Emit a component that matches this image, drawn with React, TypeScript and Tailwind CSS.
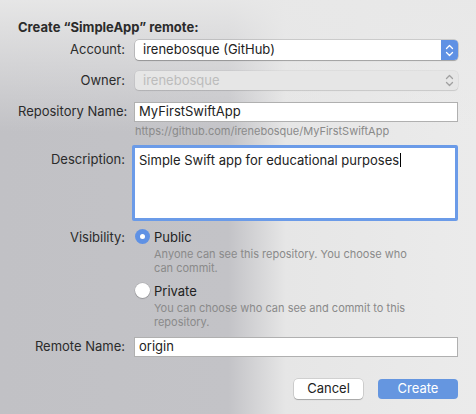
import React from 'react';

function Chevrons({ color }: { color: string }) {
  return (
    <svg width="9" height="13" viewBox="0 0 9 13" fill="none" stroke={color} strokeWidth="1.3" strokeLinecap="round" strokeLinejoin="round">
      <path d="M1.5 4.5 L4.5 1.5 L7.5 4.5" />
      <path d="M1.5 8.5 L4.5 11.5 L7.5 8.5" />
    </svg>
  );
}

function Row({ label, children, className = '' }: { label: string; children: React.ReactNode; className?: string }) {
  return (
    <div className={`flex items-center ${className}`}>
      <div className="w-[116px] shrink-0 whitespace-nowrap pr-[9px] text-right text-[13px] text-[#2b2b2b]">{label}</div>
      <div className="flex-1">{children}</div>
    </div>
  );
}

export default function App() {
  return (
    <div
      className="h-[414px] w-[476px] overflow-hidden bg-[linear-gradient(to_bottom,rgba(232,232,232,0.95)_0%,rgba(232,232,232,0)_32%),linear-gradient(to_right,#c1c1c5_0%,#c3c3c7_48%,#e6e6e6_60%,#ebebeb_100%)] pl-[18px] pr-[18px] pt-[19px]"
      style={{ fontFamily: 'Inter, "Noto Sans", sans-serif' }}
    >
      <div className="h-[16px] text-[13px] font-bold leading-[16px] text-[#2b2b2b]">Create “SimpleApp” remote:</div>

      <Row label="Account:" className="mt-[5px]">
        <div className="ml-[1px] flex h-[20px] items-center rounded-[4px] bg-white shadow-[0_0_0_0.5px_rgba(0,0,0,0.25),0_1px_1px_rgba(0,0,0,0.2)]">
          <span className="flex-1 pl-[8px] text-[13px] text-[#222]">irenebosque (GitHub)</span>
          <div className="flex h-[20px] w-[17px] items-center justify-center rounded-r-[4px] bg-[#5f91e4]">
            <Chevrons color="#ffffff" />
          </div>
        </div>
      </Row>

      <Row label="Owner:" className="mt-[11px]">
        <div className="ml-[1px] flex h-[19px] items-center rounded-[4px] bg-[#e6e6e6] shadow-[0_0_0_0.5px_rgba(0,0,0,0.08),0_1px_1px_rgba(0,0,0,0.1)]">
          <span className="flex-1 pl-[8px] text-[13px] text-[#bcbcbc]">irenebosque</span>
          <div className="flex w-[17px] items-center justify-center">
            <Chevrons color="#a0a0a0" />
          </div>
        </div>
      </Row>

      <Row label="Repository Name:" className="mt-[11px]">
        <div className="flex h-[20px] items-center border border-[#b0b0b0] bg-white pl-[4px] text-[13px] text-[#222]">MyFirstSwiftApp</div>
      </Row>
      <div className="ml-[117px] mt-[2px] h-[14px] text-[11px] leading-[14px] text-[#8a8a8a]">https://github.com/irenebosque/MyFirstSwiftApp</div>

      <div className="mt-[7px] flex">
        <div className="w-[116px] shrink-0 whitespace-nowrap pr-[9px] pt-[5px] text-right text-[13px] text-[#2b2b2b]">Description:</div>
        <div className="-ml-[2px] flex-1 rounded-[2px] border-[3px] border-[#6b9be8] bg-white">
          <div className="h-[70px] pl-[4px] pt-[3px] text-[13px] text-[#222]">
            Simple Swift app for educational purposes<span className="ml-[1px] inline-block h-[14px] w-[1px] translate-y-[2px] bg-black" />
          </div>
        </div>
      </div>

      <div className="mt-[7px] flex">
        <div className="w-[116px] shrink-0 whitespace-nowrap pr-[9px] text-right text-[13px] leading-[18px] text-[#2b2b2b]">Visibility:</div>
        <div className="flex-1">
          <div className="flex items-center">
            <div className="ml-[1px] flex h-[15px] w-[15px] items-center justify-center rounded-full bg-[#5f91e4]">
              <div className="h-[5px] w-[5px] rounded-full bg-white" />
            </div>
            <span className="ml-[4px] text-[13px] leading-[18px] text-[#222]">Public</span>
          </div>
          <div className="ml-[20px] mt-[1px] text-[11px] leading-[14px] text-[#8a8a8a]">
            Anyone can see this repository. You choose who
            <br />
            can commit.
          </div>

          <div className="mt-[7px] flex items-center">
            <div className="ml-[1px] h-[15px] w-[15px] rounded-full bg-white shadow-[0_0_0_0.5px_rgba(0,0,0,0.15),0_1px_1px_rgba(0,0,0,0.15)]" />
            <span className="ml-[4px] text-[13px] leading-[18px] text-[#222]">Private</span>
          </div>
          <div className="ml-[20px] mt-[1px] text-[11px] leading-[14px] text-[#8a8a8a]">
            You can choose who can see and commit to this
            <br />
            repository.
          </div>
        </div>
      </div>

      <Row label="Remote Name:" className="mt-[8px]">
        <div className="flex h-[20px] items-center border border-[#b0b0b0] bg-white pl-[4px] text-[13px] text-[#222]">origin</div>
      </Row>

      <div className="mt-[22px] flex justify-end gap-[15px]">
        <button className="h-[20px] w-[69px] rounded-[4px] bg-white text-[13px] text-[#222] shadow-[0_0_0_0.5px_rgba(0,0,0,0.2),0_1px_1px_rgba(0,0,0,0.2)]">Cancel</button>
        <button className="h-[20px] w-[80px] rounded-[4px] bg-[#6596e0] text-[13px] text-white">Create</button>
      </div>
    </div>
  );
}
